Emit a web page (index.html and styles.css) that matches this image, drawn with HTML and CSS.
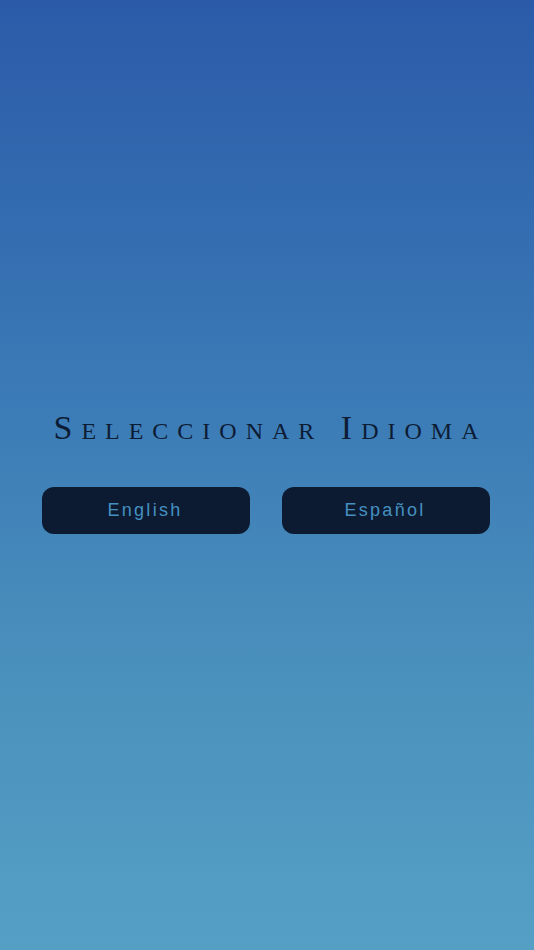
FILE: index.html
```html
<!DOCTYPE html>
<html lang="es">
  <head>
    <meta charset="UTF-8" />
    <meta name="viewport" content="width=device-width, initial-scale=1.0" />
    <title>Seleccionar Idioma</title>
    <link rel="stylesheet" href="styles.css">
  </head>

  <body>
    <main class="screen">
      <h1 class="title">Seleccionar Idioma</h1>
      <div class="choices">
        <button type="button" class="lang-button">English</button>
        <button type="button" class="lang-button">Español</button>
      </div>
    </main>
  </body>
</html>
```

FILE: styles.css
```css
html,
body {
  margin: 0;
  padding: 0;
}

.screen {
  height: 950px;
  box-sizing: border-box;
  padding-bottom: 6px;
  display: flex;
  flex-direction: column;
  align-items: center;
  justify-content: center;
  background: linear-gradient(to bottom, #2b5ba8 0%, #3a79b6 40%, #4a90bc 70%, #559fc5 100%);
}

.title {
  margin: 0 0 41px 7px;
  font-family: "Liberation Serif", serif;
  font-weight: normal;
  font-size: 34px;
  line-height: 36px;
  font-variant: small-caps;
  letter-spacing: 9px;
  color: #0d1c35;
}

.choices {
  display: flex;
  gap: 32px;
  margin-right: 2px;
}

.lang-button {
  width: 208px;
  height: 47px;
  border: none;
  border-radius: 12px;
  background-color: #0c1b32;
  color: #4590c0;
  font-family: "Liberation Sans", sans-serif;
  font-size: 18px;
  letter-spacing: 2.3px;
  padding: 0 2px 1px 0;
}
```
